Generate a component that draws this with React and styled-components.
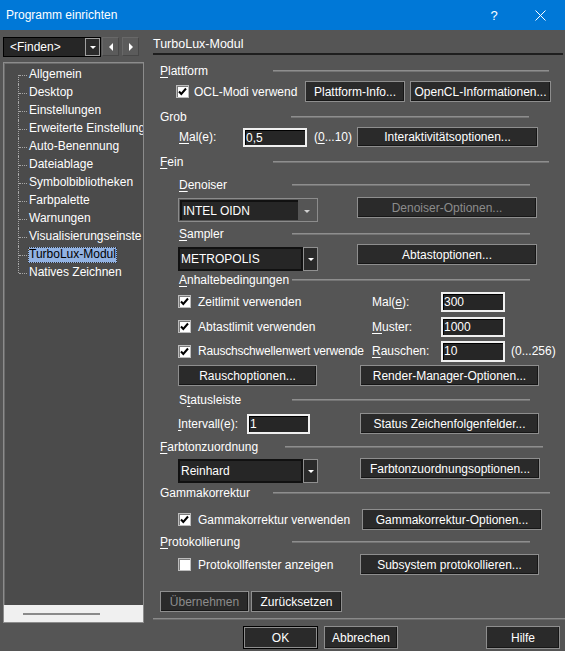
import React from 'react';
import styled, { createGlobalStyle, css } from 'styled-components';

const GlobalStyle = createGlobalStyle`
  html, body { margin: 0; padding: 0; background: #555555; }
  body { font-family: "Liberation Sans", Arial, sans-serif; font-size: 12px; color: #ffffff; }
  * { box-sizing: border-box; }
`;

const Window = styled.div`
  width: 565px;
  height: 651px;
  background: #555555;
  display: flex;
  flex-direction: column;
  overflow: hidden;
`;

const TitleBar = styled.div`
  height: 30px;
  flex: none;
  background: #0078d7;
  display: flex;
  align-items: center;
  padding-left: 6px;
  padding-right: 2px;
  color: #fff;
`;
const TitleText = styled.span`
  flex: 1;
  font-size: 12px;
`;
const TitleButton = styled.div`
  width: 46px;
  height: 30px;
  display: flex;
  align-items: center;
  justify-content: center;
  font-size: 13px;
`;

const Main = styled.div`
  flex: 1;
  display: flex;
`;

/* ---------- left pane ---------- */
const LeftPane = styled.div`
  width: 152px;
  flex: none;
  padding: 7px 0 0 3px;
  display: flex;
  flex-direction: column;
`;
const FinderRow = styled.div`
  display: flex;
  height: 20px;
`;
const FinderCombo = styled.div`
  width: 98px;
  height: 20px;
  background: #262626;
  border: 1px solid #000;
  display: flex;
  align-items: stretch;
`;
const FinderText = styled.span`
  flex: 1;
  padding-left: 6px;
  line-height: 18px;
`;
const DropButton = styled.div`
  width: 15px;
  flex: none;
  border: 1px solid #a0a0a0;
  background: #2b2b2b;
  display: flex;
  align-items: center;
  justify-content: center;
`;
const DownTri = styled.span`
  width: 0;
  height: 0;
  border-left: 3px solid transparent;
  border-right: 3px solid transparent;
  border-top: 3px solid ${p => p.$color || '#fff'};
`;
const NavButton = styled.div`
  width: 17px;
  height: 19px;
  margin-left: ${p => p.$ml}px;
  background: #5b5b5b;
  border: 1px solid;
  border-color: #686868 #474747 #474747 #686868;
  display: flex;
  align-items: center;
  justify-content: center;
`;
const SideTri = styled.span`
  width: 0;
  height: 0;
  border-top: 4px solid transparent;
  border-bottom: 4px solid transparent;
  ${p => p.$dir === 'left'
    ? css`border-right: 4px solid #fff;`
    : css`border-left: 4px solid #fff;`}
`;

const Tree = styled.div`
  margin-top: 5px;
  width: 141px;
  height: 561px;
  border: 1px solid #8c8c8c;
  box-shadow: inset 1px 1px 0 #6a6a6a;
  background: #4b4b4b;
  display: flex;
  flex-direction: column;
`;
const TreeList = styled.div`
  flex: 1;
  padding: 3px 0 0 14px;
  overflow: hidden;
`;
const TreeItem = styled.div`
  height: 18px;
  display: flex;
  align-items: center;
  white-space: nowrap;
`;
const Connector = styled.span`
  position: relative;
  width: 10px;
  flex: none;
  align-self: stretch;
  &::before {
    content: '';
    position: absolute;
    left: 0;
    top: ${p => (p.$first ? '9px' : '0')};
    bottom: ${p => (p.$last ? '9px' : '0')};
    border-left: 1px dotted #a8a8a8;
  }
  &::after {
    content: '';
    position: absolute;
    left: 1px;
    top: 9px;
    width: 8px;
    border-top: 1px dotted #a8a8a8;
  }
`;
const TreeLabel = styled.span`
  padding: 0 1px;
  line-height: 15px;
  height: 16px;
  ${p => p.$selected && css`
    background: #92b2e2;
    color: #000;
    outline: 1px dotted #333;
    outline-offset: -1px;
  `}
`;
const TreeScroll = styled.div`
  height: 17px;
  flex: none;
  background: #f0f0f0;
  display: flex;
  align-items: center;
  padding-left: 19px;
`;
const ScrollThumb = styled.div`
  width: 77px;
  height: 2px;
  background: #8a8a8a;
`;

/* ---------- right pane ---------- */
const RightPane = styled.div`
  flex: 1;
  display: flex;
  flex-direction: column;
`;
const PageHeader = styled.div`
  margin: 0 2px 0 1px;
  height: 25px;
  padding-top: 6px;
  line-height: 16px;
  font-size: 12.5px;
  border-bottom: 2px solid #1e1e1e;
`;

const SectionRow = styled.div`
  display: flex;
  align-items: center;
  height: 18px;
  margin-top: ${p => p.$mt}px;
  padding-left: ${p => p.$indent}px;
`;
const SectionLabel = styled.span`
  width: ${p => p.$w}px;
  flex: none;
  white-space: nowrap;
`;
const Rule = styled.span`
  width: ${p => p.$w}px;
  flex: none;
  height: 2px;
  border-top: 1px solid #8e8e8e;
  border-bottom: 1px solid #747474;
`;

const U = styled.span`
  text-decoration: underline;
  text-underline-offset: 2px;
`;

const Row = styled.div`
  display: flex;
  align-items: ${p => p.$align || 'center'};
  height: ${p => p.$h}px;
  margin-top: ${p => p.$mt}px;
  padding-left: ${p => p.$pl}px;
`;

const Button = styled.button`
  font: inherit;
  width: ${p => p.$w}px;
  height: ${p => p.$h || 21}px;
  margin-left: ${p => p.$ml || 0}px;
  flex: none;
  padding: 0;
  background: #2a2a2a;
  color: ${p => (p.disabled ? '#8c8c8c' : '#ffffff')};
  border: 1px solid #8e8e8e;
  box-shadow: inset -1px -1px 0 #161616;
  white-space: nowrap;
  ${p => p.$default && css`
    border: 1px solid #000;
    box-shadow: inset 0 0 0 1px #8e8e8e;
  `}
`;

const CheckBox = styled.span`
  width: 13px;
  height: 13px;
  flex: none;
  background: #fff;
  border: 1px solid #bdbdbd;
  box-shadow: inset 1px 1px 0 #7a7a7a;
  display: flex;
  align-items: center;
  justify-content: center;
`;
const CheckText = styled.span`
  width: ${p => p.$w}px;
  flex: none;
  margin-left: ${p => p.$gap}px;
  white-space: nowrap;
  letter-spacing: ${p => p.$tight ? '-0.2px' : 'normal'};
`;
const FieldLabel = styled.span`
  width: ${p => p.$w}px;
  flex: none;
  padding-left: ${p => p.$pl || 0}px;
  white-space: nowrap;
`;
const TextBox = styled.div`
  width: ${p => p.$w}px;
  height: ${p => p.$h || 20}px;
  flex: none;
  background: #262626;
  border: 2px solid #f0f0f0;
  box-shadow: inset 1px 1px 0 #000;
  padding-left: 1px;
  line-height: 16px;
  white-space: nowrap;
`;
const Hint = styled.span`
  width: ${p => p.$w}px;
  flex: none;
  padding-left: ${p => p.$pl}px;
  white-space: nowrap;
`;

const Combo = styled.div`
  width: 140px;
  height: 24px;
  flex: none;
  display: flex;
  margin-top: ${p => p.$mt || 0}px;
  ${p => p.$flat && css`
    border: 1px solid #8c8c8c;
    padding: 1px;
  `}
`;
const ComboField = styled.div`
  width: ${p => p.$w}px;
  flex: none;
  background: #262626;
  border: 2px solid #111;
  ${p => p.$flat && css`
    border-width: 2px 0 0 2px;
  `}
  padding-left: 1px;
  display: flex;
  align-items: center;
  white-space: nowrap;
`;
const ComboArrowArea = styled.div`
  flex: 1;
  display: flex;
  align-items: center;
  justify-content: center;
  padding-top: 2px;
`;
const ComboButton = styled.div`
  flex: 1;
  background: #2a2a2a;
  border: 1px solid #909090;
  display: flex;
  align-items: center;
  justify-content: center;
`;

const Separator = styled.div`
  height: 2px;
  margin: 6px 0 0 1px;
  border-top: 1px solid #8a8a8a;
  border-bottom: 1px solid #6c6c6c;
`;

const Spacer = styled.span`
  flex: 1;
`;
const EdgeGap = styled.span`
  width: 5px;
  flex: none;
`;

const Check = () => (
  <svg width="9" height="9" viewBox="0 0 9 9">
    <polyline points="1,4.5 3.3,7 8,1.5" fill="none" stroke="#000" strokeWidth="2" />
  </svg>
);

const Section = ({ level, from, to, mt, children }) => {
  const labelX = level === 1 ? 160 : 179;
  const indent = labelX - 152;
  return (
    <SectionRow $mt={mt} $indent={indent}>
      <SectionLabel $w={from - labelX}>{children}</SectionLabel>
      <Rule $w={to - from} />
    </SectionRow>
  );
};

const treeItems = [
  'Allgemein',
  'Desktop',
  'Einstellungen',
  'Erweiterte Einstellung',
  'Auto-Benennung',
  'Dateiablage',
  'Symbolbibliotheken',
  'Farbpalette',
  'Warnungen',
  'Visualisierungseinste',
  'TurboLux-Modul',
  'Natives Zeichnen',
];

export default function App() {
  return (
    <Window>
      <GlobalStyle />
      <TitleBar>
        <TitleText>Programm einrichten</TitleText>
        <TitleButton>?</TitleButton>
        <TitleButton>
          <svg width="11" height="11" viewBox="0 0 11 11">
            <path d="M0.5 0.5 L10.5 10.5 M10.5 0.5 L0.5 10.5" stroke="#fff" strokeWidth="1" />
          </svg>
        </TitleButton>
      </TitleBar>
      <Main>
        <LeftPane>
          <FinderRow>
            <FinderCombo>
              <FinderText>&lt;Finden&gt;</FinderText>
              <DropButton><DownTri /></DropButton>
            </FinderCombo>
            <NavButton $ml={1}><SideTri $dir="left" /></NavButton>
            <NavButton $ml={3}><SideTri $dir="right" /></NavButton>
          </FinderRow>
          <Tree>
            <TreeList>
              {treeItems.map((t, i) => (
                <TreeItem key={t}>
                  <Connector $first={i === 0} $last={i === treeItems.length - 1} />
                  <TreeLabel $selected={t === 'TurboLux-Modul'}>{t}</TreeLabel>
                </TreeItem>
              ))}
            </TreeList>
            <TreeScroll><ScrollThumb /></TreeScroll>
          </Tree>
        </LeftPane>

        <RightPane>
          <PageHeader>TurboLux-Modul</PageHeader>

          <Section level={1} from={273} to={549} mt={7}><U>P</U>lattform</Section>
          <Row $h={21} $mt={1} $pl={24}>
            <CheckBox><Check /></CheckBox>
            <CheckText $w={104} $gap={5}>OCL-Modi verwend</CheckText>
            <Button $w={100} $ml={7}>Plattform-Info...</Button>
            <Button $w={141} $ml={5}>OpenCL-Informationen...</Button>
          </Row>

          <Section level={1} from={291} to={529} mt={6}>Grob</Section>
          <Row $h={20} $mt={1} $pl={27}>
            <FieldLabel $w={64}><U>M</U>al(e):</FieldLabel>
            <TextBox $w={64} $h={19}>0,5</TextBox>
            <Hint $w={50} $pl={7}>(<U>0</U>...10)</Hint>
            <Button $w={181} $h={20}>Interaktivitätsoptionen...</Button>
          </Row>

          <Section level={1} from={273} to={549} mt={6}><U>F</U>ein</Section>
          <Section level={2} from={292} to={530} mt={5}><U>D</U>enoiser</Section>
          <Row $h={25} $mt={3} $pl={26} $align="flex-start">
            <Combo $flat $mt={1}>
              <ComboField $w={118} $flat>INTEL OIDN</ComboField>
              <ComboArrowArea><DownTri $color="#d0d0d0" /></ComboArrowArea>
            </Combo>
            <Button $w={180} $ml={39} disabled>Denoiser-Optionen...</Button>
          </Row>

          <Section level={2} from={292} to={530} mt={3}><U>S</U>ampler</Section>
          <Row $h={27} $mt={1} $pl={26} $align="flex-start">
            <Combo $mt={3}>
              <ComboField $w={125}>METROPOLIS</ComboField>
              <ComboButton><DownTri /></ComboButton>
            </Combo>
            <Button $w={180} $ml={39}>Abtastoptionen...</Button>
          </Row>

          <Section level={2} from={292} to={530} mt={0}><U>A</U>nhaltebedingungen</Section>
          <Row $h={21} $mt={2} $pl={26}>
            <CheckBox><Check /></CheckBox>
            <CheckText $w={166} $gap={7}>Zeitlimit verwenden</CheckText>
            <FieldLabel $w={77} $pl={8}>Mal(<U>e</U>):</FieldLabel>
            <TextBox $w={64}>300</TextBox>
          </Row>
          <Row $h={21} $mt={4} $pl={26}>
            <CheckBox><Check /></CheckBox>
            <CheckText $w={166} $gap={7}>Abtastlimit verwenden</CheckText>
            <FieldLabel $w={77} $pl={8}><U>M</U>uster:</FieldLabel>
            <TextBox $w={64}>1000</TextBox>
          </Row>
          <Row $h={22} $mt={3} $pl={26}>
            <CheckBox><Check /></CheckBox>
            <CheckText $w={166} $gap={7} $tight>Rauschschwellenwert verwende</CheckText>
            <FieldLabel $w={77} $pl={8}><U>R</U>auschen:</FieldLabel>
            <TextBox $w={64} $h={21}>10</TextBox>
            <Hint $w={60} $pl={6}>(0...256)</Hint>
          </Row>
          <Row $h={21} $mt={3} $pl={26}>
            <Button $w={139}>Rauschoptionen...</Button>
            <Button $w={179} $ml={43}>Render-Manager-Optionen...</Button>
          </Row>

          <Section level={2} from={292} to={530} mt={5}>S<U>t</U>atusleiste</Section>
          <Row $h={21} $mt={4} $pl={26}>
            <FieldLabel $w={69}><U>I</U>ntervall(e):</FieldLabel>
            <TextBox $w={63}>1</TextBox>
            <Button $w={179} $ml={50}>Status Zeichenfolgenfelder...</Button>
          </Row>

          <Section level={1} from={285} to={543} mt={4}><U>F</U>arbtonzuordnung</Section>
          <Row $h={25} $mt={2} $pl={26} $align="flex-start">
            <Combo $mt={1}>
              <ComboField $w={125}>Reinhard</ComboField>
              <ComboButton><DownTri /></ComboButton>
            </Combo>
            <Button $w={180} $ml={42}>Farbtonzuordnungsoptionen...</Button>
          </Row>

          <Section level={1} from={273} to={550} mt={1}>Gammakorrektur</Section>
          <Row $h={21} $mt={7} $pl={26}>
            <CheckBox><Check /></CheckBox>
            <CheckText $w={157} $gap={7}>Gammakorrektur verwenden</CheckText>
            <Button $w={180} $ml={7}>Gammakorrektur-Optionen...</Button>
          </Row>

          <Section level={1} from={292} to={530} mt={3}><U>P</U>rotokollierung</Section>
          <Row $h={21} $mt={3} $pl={26}>
            <CheckBox />
            <CheckText $w={157} $gap={7}>Protokollfenster anzeigen</CheckText>
            <Button $w={179} $ml={5}>Subsystem protokollieren...</Button>
          </Row>

          <Row $h={21} $mt={16} $pl={8}>
            <Button $w={89} disabled>Übernehmen</Button>
            <Button $w={91} $ml={2}>Zurücksetzen</Button>
          </Row>
          <Separator />
          <Row $h={23} $mt={6} $pl={91}>
            <Button $w={75} $h={23} $default>OK</Button>
            <Button $w={74} $h={23} $ml={6}>Abbrechen</Button>
            <Spacer />
            <Button $w={74} $h={23}>Hilfe</Button>
            <EdgeGap />
          </Row>
        </RightPane>
      </Main>
    </Window>
  );
}
